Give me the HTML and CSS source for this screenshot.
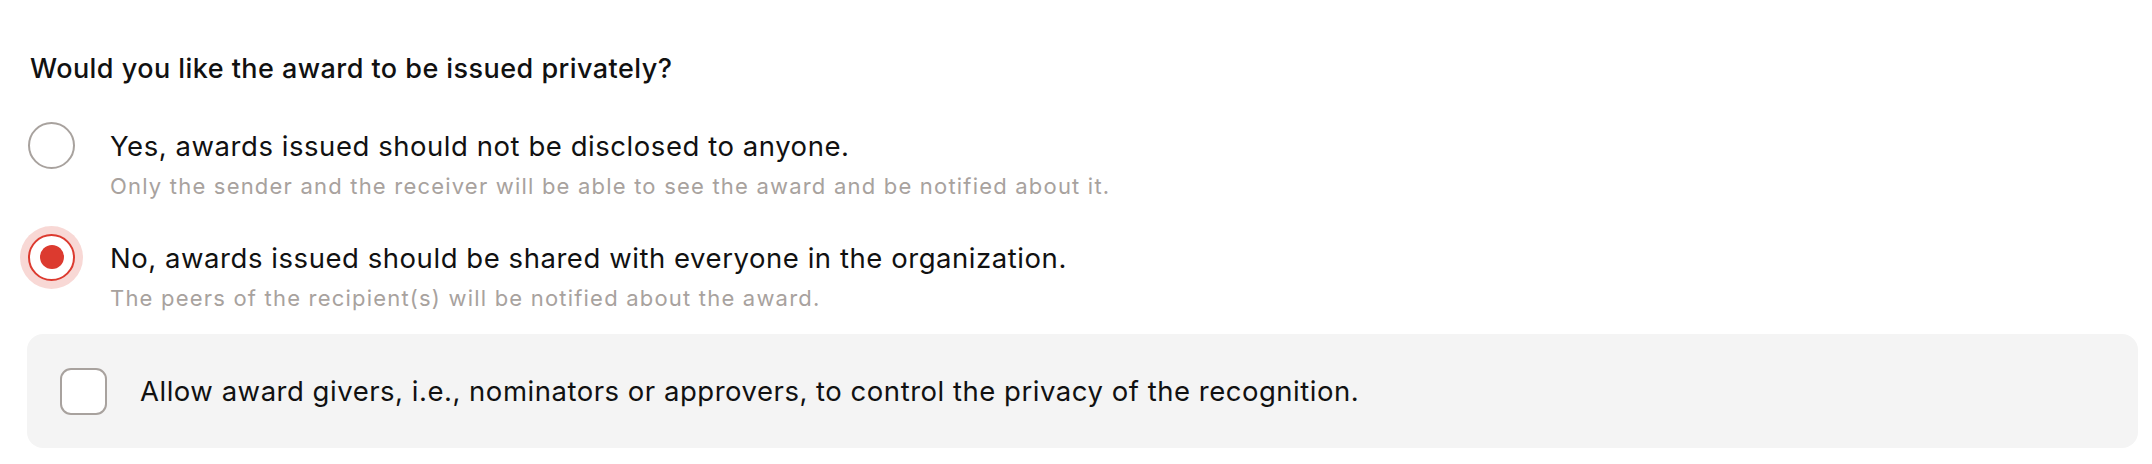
FILE: index.html
```html
<!DOCTYPE html>
<html lang="en">
  <head>
    <meta charset="UTF-8" />
    <meta name="viewport" content="width=device-width, initial-scale=1.0" />
    <title>Award privacy</title>
    <link rel="stylesheet" href="styles.css">
  </head>
  <body>
    <div class="settings">
      <h2 class="question">Would you like the award to be issued privately?</h2>

      <ul class="options">
        <li class="option">
          <span class="radio"></span>
          <div class="option-text">
            <div class="option-label">Yes, awards issued should not be disclosed to anyone.</div>
            <div class="option-hint">Only the sender and the receiver will be able to see the award and be notified about it.</div>
          </div>
        </li>
        <li class="option">
          <span class="radio checked"></span>
          <div class="option-text">
            <div class="option-label">No, awards issued should be shared with everyone in the organization.</div>
            <div class="option-hint">The peers of the recipient(s) will be notified about the award.</div>
          </div>
        </li>
      </ul>

      <!-- permissao extra -->
      <div class="toggle-box">
        <span class="checkbox"></span>
        <span class="toggle-label">Allow award givers, i.e., nominators or approvers, to control the privacy of the recognition.</span>
      </div>
    </div>
  </body>
</html>
```

FILE: styles.css
```css
body,
html {
  margin: 0;
  padding: 0;
  background: #fff;
}

.settings {
  padding: 52px 14px 0 27px;
  font-family: Inter, "Noto Sans", sans-serif;
  color: #111;
}

.question {
  margin: 0;
  font-size: 27px;
  line-height: 34px;
  font-weight: 500;
  letter-spacing: 0.45px;
  padding-left: 3px;
}

.options {
  list-style-type: none;
  margin: 44px 0 0;
  padding: 0;
}

.option {
  display: flex;
  align-items: flex-start;
  gap: 35px;
  margin-bottom: 41px;
  padding-left: 1px;
}

.option:last-child {
  margin-bottom: 0;
}

.radio {
  flex: none;
  box-sizing: border-box;
  width: 47px;
  height: 47px;
  margin-top: -8px;
  border: 2px solid #a8a29e;
  border-radius: 50%;
  background: #fff;
  position: relative;
}

.radio.checked {
  border-color: #dc3a2f;
  box-shadow: 0 0 0 8px rgba(220, 58, 47, 0.2);
}

.radio.checked::after {
  content: "";
  position: absolute;
  top: 9.5px;
  left: 9.5px;
  width: 24px;
  height: 24px;
  border-radius: 50%;
  background: #dc3a2f;
}

.option-label {
  font-size: 27.5px;
  line-height: 33px;
  letter-spacing: 0.55px;
}

.option-hint {
  margin-top: 10px;
  font-size: 22px;
  line-height: 27.5px;
  letter-spacing: 1.2px;
  color: #a8a29e;
}

.toggle-box {
  display: flex;
  align-items: center;
  gap: 33px;
  margin-top: 22px;
  padding: 33.5px 33px;
  background-color: #f4f4f4;
  border-radius: 16px;
}

.checkbox {
  flex: none;
  box-sizing: border-box;
  width: 47px;
  height: 47px;
  border: 2px solid #a8a29e;
  border-radius: 11px;
  background: #fff;
}

.toggle-label {
  font-size: 27.5px;
  line-height: 33px;
  letter-spacing: 0.52px;
}
```
